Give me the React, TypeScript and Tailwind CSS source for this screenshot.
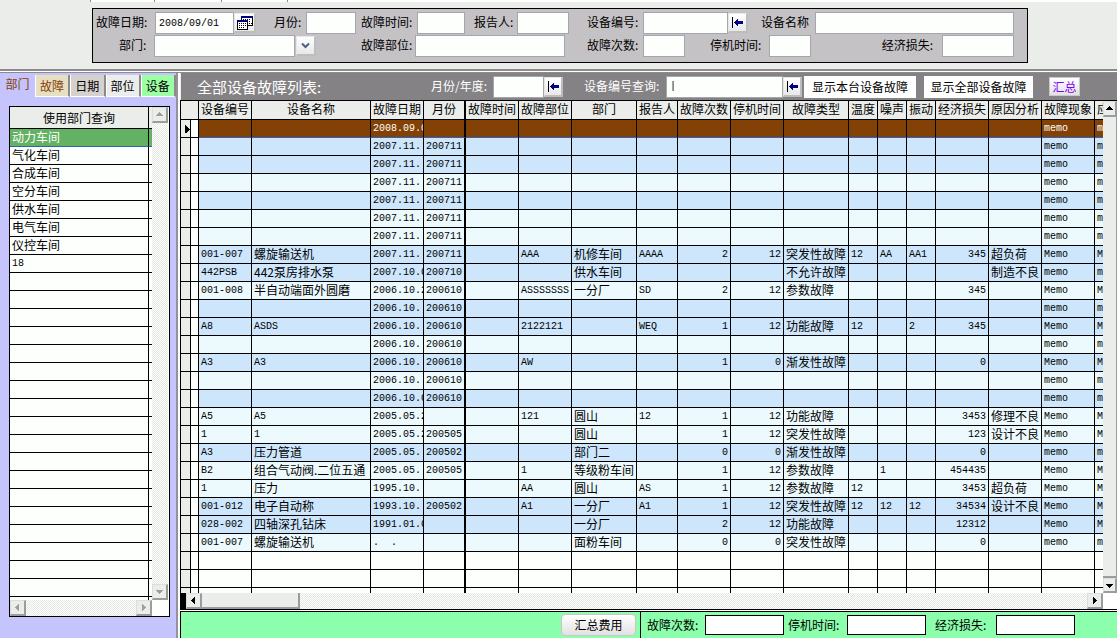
import { useState } from "react";
import clsx from "clsx";

type Tone = "selected" | "blue" | "light" | "blank";

interface Row {
  tone: Tone;
  cells: string[];
}

interface Column {
  label: string;
  width: string;
  right?: boolean;
  thick?: boolean;
}

const columns: Column[] = [
  { label: "设备编号", width: "w-[53px]" },
  { label: "设备名称", width: "w-[119px]" },
  { label: "故障日期", width: "w-[53px]" },
  { label: "月份", width: "w-[42px]", thick: true },
  { label: "故障时间", width: "w-[53px]" },
  { label: "故障部位", width: "w-[53px]" },
  { label: "部门", width: "w-[65px]" },
  { label: "报告人", width: "w-[41px]" },
  { label: "故障次数", width: "w-[53px]", right: true },
  { label: "停机时间", width: "w-[53px]", right: true },
  { label: "故障类型", width: "w-[65px]" },
  { label: "温度", width: "w-[29px]" },
  { label: "噪声", width: "w-[29px]" },
  { label: "振动", width: "w-[29px]" },
  { label: "经济损失", width: "w-[53px]", right: true },
  { label: "原因分析", width: "w-[53px]" },
  { label: "故障现象", width: "w-[53px]" },
  { label: "应急措施", width: "w-[53px]" },
];

const row = (tone: Tone, line: string): Row => ({
  tone,
  cells: line.split("|"),
});

// code|name|date|month|time|part|dept|reporter|count|stop|type|temp|noise|vibration|loss|cause|memo|memo
const rows: Row[] = [
  row("selected", "||2008.09.01||||||||||||||memo|memo"),
  row("blue", "||2007.11.|200711|||||||||||||memo|memo"),
  row("blue", "||2007.11.|200711|||||||||||||memo|memo"),
  row("light", "||2007.11.|200711|||||||||||||memo|memo"),
  row("blue", "||2007.11.|200711|||||||||||||memo|memo"),
  row("light", "||2007.11.|200711|||||||||||||memo|memo"),
  row("light", "||2007.11.|200711|||||||||||||memo|memo"),
  row("blue", "001-007|螺旋输送机|2007.11.|200711||AAA|机修车间|AAAA|2|12|突发性故障|12|AA|AA1|345|超负荷|Memo|Memo"),
  row("blue", "442PSB|442泵房排水泵|2007.10.0|200710|||供水车间||||不允许故障|||||制造不良|memo|memo"),
  row("light", "001-008|半自动端面外圆磨|2006.10.2|200610||ASSSSSSS|一分厂|SD|2|12|参数故障||||345||Memo|Memo"),
  row("blue", "||2006.10.|200610|||||||||||||memo|memo"),
  row("blue", "A8|ASDS|2006.10.|200610||2122121||WEQ|1|12|功能故障|12||2|345||Memo|Memo"),
  row("light", "||2006.10.|200610|||||||||||||memo|memo"),
  row("blue", "A3|A3|2006.10.|200610||AW|||1|0|渐发性故障||||0||Memo|Memo"),
  row("light", "||2006.10.|200610|||||||||||||memo|memo"),
  row("blue", "||2006.10.0|200610|||||||||||||memo|memo"),
  row("light", "A5|A5|2005.05.2|||121|圆山|12|1|12|功能故障||||3453|修理不良|Memo|Memo"),
  row("light", "1|1|2005.05.2|200505|||圆山||1|12|突发性故障||||123|设计不良|Memo|Memo"),
  row("blue", "A3|压力管道|2005.05.|200502|||部门二||0|0|渐发性故障||||0||memo|memo"),
  row("light", "B2|组合气动阀.二位五通|2005.05.|200505||1|等级粉车间||1|12|参数故障||1||454435||Memo|Memo"),
  row("light", "1|压力|1995.10.|||AA|圆山|AS|1|12|参数故障|12|||3453|超负荷|Memo|Memo"),
  row("blue", "001-012|电子自动称|1993.10.|200502||A1|一分厂|A1|1|12|突发性故障|12|12|12|34534|设计不良|Memo|Memo"),
  row("blue", "028-002|四轴深孔钻床|1991.01.0||||一分厂||2|12|功能故障||||12312||Memo|Memo"),
  row("light", "001-007|螺旋输送机|.  .||||面粉车间||0|0|突发性故障||||0||memo|memo"),
  row("blank", "|||||||||||||||||"),
  row("blank", "|||||||||||||||||"),
  row("blank", "|||||||||||||||||"),
];

const departments = [
  "动力车间",
  "气化车间",
  "合成车间",
  "空分车间",
  "供水车间",
  "电气车间",
  "仪控车间",
  "18",
  ...Array<string>(19).fill(""),
];

const toneClass: Record<Tone, string> = {
  selected: "bg-[#844105] text-white",
  blue: "bg-[#cde6fc]",
  light: "bg-[#edfafd]",
  blank: "bg-[#fdfffc]",
};

const isLatin = (text: string) => /^[\x20-\x7e]*$/.test(text);

const track =
  "bg-[repeating-conic-gradient(#ffffff_0%_25%,#e6e8e4_0%_50%)] bg-[length:2px_2px]";

const mono = "font-['Liberation_Mono',monospace] text-[10px]";

// Chinese glyphs sit lower in their line box than the mono ones
const cellText = (text: string) =>
  isLatin(text) ? `${mono} leading-[17px]` : "pb-[2px] leading-[15px]";

interface FieldProps {
  id: string;
  label: string;
  labelClass: string;
  inputClass: string;
  defaultValue?: string;
}

const Field: React.FC<FieldProps> = ({
  id,
  label,
  labelClass,
  inputClass,
  defaultValue,
}) => (
  <>
    <label
      htmlFor={id}
      className={clsx("shrink-0 pb-[2px] whitespace-nowrap", labelClass)}
    >
      {label}
    </label>
    <input
      id={id}
      defaultValue={defaultValue}
      className={clsx(
        "h-[22px] min-w-0 border border-[#a5a5ad] bg-[#fdfffc] px-[3px] outline-none",
        mono,
        inputClass
      )}
    />
  </>
);

const BackArrow = () => (
  <svg width="11" height="11" viewBox="0 0 11 11" shapeRendering="crispEdges">
    <path d="M0 0h1v11H0z" fill="#000" />
    <path
      d="M2 5h1V4h1V3h1V2h1v2h5v3H6v2H5V8H4V7H3V6H2z"
      fill="#000084"
    />
  </svg>
);

const CalendarIcon = () => (
  <svg width="16" height="14" viewBox="0 0 16 14" shapeRendering="crispEdges">
    <path d="M4.5.5h11v9h-11z" fill="#fff" stroke="#000" />
    <path d="M4 0h12v2H4z" fill="#000084" />
    <path d="M6 3.5h8M6 5.5h8M12 7.5h3" stroke="#000" strokeDasharray="1 1" />
    <path d="M.5 4.5h10v9H.5z" fill="#fff" stroke="#000" />
    <path d="M0 4h11v2H0z" fill="#000084" />
    <path d="M2 7.5h8M2 9.5h8M2 11.5h6" stroke="#000" strokeDasharray="1 1" />
  </svg>
);

const IconButton: React.FC<{
  label: string;
  className?: string;
  children: React.ReactNode;
}> = ({ label, className, children }) => (
  <button
    type="button"
    aria-label={label}
    className={clsx(
      "flex shrink-0 items-center justify-center border border-r-2 border-b-2 border-t-[#e6e6e6] border-r-[#bdbdbd] border-b-[#bdbdbd] border-l-[#e6e6e6] bg-linear-to-b from-white to-[#e8e8e8]",
      className
    )}
  >
    {children}
  </button>
);

const arrows = {
  up: "M4 2h1v1h1v1h1v1h1v1H1V5h1V4h1V3h1z",
  down: "M1 3h7v1H7v1H6v1H5v1H4V6H3V5H2V4H1z",
  left: "M6 1v7H5V7H4V6H3V5H2V4h1V3h1V2h1V1z",
  right: "M3 1v7h1V7h1V6h1V5h1V4H6V3H5V2H4V1z",
};

const ScrollButton: React.FC<{
  dir: keyof typeof arrows;
  dim?: boolean;
  className: string;
}> = ({ dir, dim, className }) => (
  <button
    type="button"
    aria-label={dir}
    className={clsx(
      "flex shrink-0 items-center justify-center border-t border-r-2 border-b-2 border-l border-t-[#dcdedb] border-r-[#9a9ca0] border-b-[#9a9ca0] border-l-[#dcdedb] bg-[#ebedea]",
      className
    )}
  >
    <svg width="9" height="9" viewBox="0 0 9 9" shapeRendering="crispEdges">
      <path d={arrows[dir]} fill={dim ? "#9c9ea0" : "#000"} />
    </svg>
  </button>
);

const FormPanel = () => (
  <div className="mt-[6px] mr-[89px] mb-[6px] ml-[92px] flex flex-col gap-px border border-black bg-[#c5c2c6] pt-[3px] pr-[13px] pb-[5px]">
    <div className="flex items-center">
      <Field id="date" label="故障日期:" labelClass="w-[62px] pl-[3px]" inputClass="w-[79px]" defaultValue="2008/09/01" />
      <IconButton label="选择日期" className="h-5 w-[22px]">
        <CalendarIcon />
      </IconButton>
      <Field id="month" label="月份:" labelClass="w-[50px] pl-[18px]" inputClass="w-[50px]" />
      <Field id="time" label="故障时间:" labelClass="w-[61px] pl-[5px]" inputClass="w-[48px]" />
      <Field id="reporter" label="报告人:" labelClass="w-[52px] pl-[9px]" inputClass="w-[52px]" />
      <Field id="code" label="设备编号:" labelClass="w-[74px] pl-[18px]" inputClass="w-[85px]" />
      <IconButton label="取设备编号" className="h-5 w-5">
        <BackArrow />
      </IconButton>
      <Field id="name" label="设备名称" labelClass="w-[67px] pl-[13px]" inputClass="flex-1" />
    </div>
    <div className="flex items-center">
      <Field id="dept" label="部门:" labelClass="w-[61px] pl-[26px]" inputClass="w-[141px]" />
      <IconButton label="选择部门" className="ml-px h-5 w-5">
        <svg width="9" height="7" viewBox="0 0 9 7" fill="none">
          <path d="M1 1.5l3.5 3.5L8 1.5" stroke="#4a6184" strokeWidth="2" />
        </svg>
      </IconButton>
      <Field id="part" label="故障部位:" labelClass="w-[99px] pl-[45px]" inputClass="w-[150px]" />
      <Field id="count" label="故障次数:" labelClass="w-[78px] pl-[22px]" inputClass="w-[42px]" />
      <Field id="stop" label="停机时间:" labelClass="w-[84px] pl-[25px]" inputClass="w-[42px]" />
      <Field id="loss" label="经济损失:" labelClass="flex-1 pr-[9px] text-right" inputClass="w-[72px]" />
    </div>
  </div>
);

const tabs = [
  { label: "部门", style: "w-[35px] h-[22px] text-[#844105]" },
  { label: "故障", style: "flex-1 bg-[#e6dfc2] text-[#844105]" },
  { label: "日期", style: "flex-1 bg-[#d5d2cd]" },
  { label: "部位", style: "flex-1 bg-[#ebedea]" },
  { label: "设备", style: "flex-1 bg-[#9cffa4]" },
];

const Sidebar = () => {
  const [selected, setSelected] = useState(0);

  return (
    <aside className="flex w-[176px] shrink-0 flex-col bg-[#c5c4fc]">
      <div className="flex">
        {tabs.map((tab, index) => (
          <button
            key={tab.label}
            type="button"
            className={clsx(
              "leading-4",
              index > 0 &&
                "mt-[2px] h-[22px] border-r-2 border-b border-l border-r-[#8c8a8c] border-b-white border-l-white",
              tab.style
            )}
          >
            {tab.label}
          </button>
        ))}
      </div>
      <div className="mt-[9px] mr-[6px] mb-[21px] ml-[9px] flex min-h-0 flex-1 flex-col border border-black bg-[#fdfffc]">
        <div className="flex min-h-0 flex-1">
          <div className="min-w-0 flex-1 overflow-hidden">
            <table className="w-full table-fixed border-separate border-spacing-0">
              <thead>
                <tr>
                  <th className="h-[22px] border-r border-b border-black bg-[#ebedea] p-0 font-normal">
                    使用部门查询
                  </th>
                  <th className="w-[3px] border-b border-black bg-[#ebedea] p-0" />
                </tr>
              </thead>
              <tbody>
                {departments.map((name, index) => (
                  <tr
                    key={index}
                    onClick={() => setSelected(index)}
                    className={clsx(index === selected && "bg-[#63b163] text-white")}
                  >
                    <td
                      className={clsx(
                        "h-[18px] border-r border-b border-r-black p-0 pl-[2px]",
                        index === selected ? "border-b-[#3163b5]" : "border-b-black",
                        cellText(name)
                      )}
                    >
                      {name}
                    </td>
                    <td
                      className={clsx(
                        "border-b p-0",
                        index === selected ? "border-b-[#3163b5]" : "border-b-black"
                      )}
                    />
                  </tr>
                ))}
              </tbody>
            </table>
          </div>
          <div className={clsx("mr-px flex w-4 flex-col justify-between", track)}>
            <ScrollButton dir="up" dim className="h-4 w-4" />
            <ScrollButton dir="down" dim className="h-4 w-4" />
          </div>
        </div>
        <div className={clsx("mr-[17px] flex h-4 justify-between", track)}>
          <ScrollButton dir="left" dim className="h-4 w-4" />
          <ScrollButton dir="right" dim className="h-4 w-4" />
        </div>
      </div>
    </aside>
  );
};

const Toolbar = () => (
  <div className="flex h-[27px] items-center bg-[#848284] text-white">
    <h1 className="w-[250px] shrink-0 pl-4 text-[15px]">全部设备故障列表:</h1>
    <Field id="period" label="月份/年度:" labelClass="w-[62px]" inputClass="w-[51px] text-black" />
    <IconButton label="按月份查询" className="h-5 w-[19px]">
      <BackArrow />
    </IconButton>
    <Field
      id="lookup"
      label="设备编号查询:"
      labelClass="w-[103px] pl-[21px]"
      inputClass="w-[117px] text-black"
      defaultValue="|"
    />
    <IconButton label="按设备编号查询" className="h-5 w-[19px]">
      <BackArrow />
    </IconButton>
    <button type="button" className="ml-[2px] h-[22px] w-28 shrink-0 bg-white text-black">
      显示本台设备故障
    </button>
    <button type="button" className="ml-2 h-[22px] w-[109px] shrink-0 bg-white text-black">
      显示全部设备故障
    </button>
    <button
      type="button"
      className="ml-4 h-[19px] w-[31px] shrink-0 border border-[#c8c8c8] bg-linear-to-b from-white to-[#e2e2e2] leading-4 text-[#8000ff]"
    >
      汇总
    </button>
  </div>
);

const FaultTable = () => (
  <table className="w-[967px] table-fixed border-separate border-spacing-0">
    <colgroup>
      <col className="w-[10px]" />
      <col className="w-2" />
      {columns.map((col) => (
        <col key={col.label} className={col.width} />
      ))}
    </colgroup>
    <thead>
      <tr className="bg-[#ebedea]">
        <th colSpan={2} className="h-[19px] border-r border-b border-black p-0" />
        {columns.map((col) => (
          <th
            key={col.label}
            className={clsx(
              "overflow-hidden border-b border-black p-0 pb-[3px] leading-[15px] font-normal whitespace-nowrap",
              col.thick ? "border-r-2" : "border-r"
            )}
          >
            {col.label}
          </th>
        ))}
      </tr>
    </thead>
    <tbody>
      {rows.map((item, index) => (
        <tr key={index} className={toneClass[item.tone]}>
          <td className="h-[18px] border-r border-b border-black bg-[#ebedea] p-0">
            {item.tone === "selected" && (
              <svg width="9" height="8" viewBox="0 0 9 8" shapeRendering="crispEdges">
                <path d="M4 0h1v1h1v1h1v1h1v1h1v1H8v1H7v1H6v1H4z" fill="#000" />
              </svg>
            )}
          </td>
          <td className="border-r border-b border-black bg-[#fdfffc] p-0" />
          {columns.map((col, i) => (
            <td
              key={col.label}
              className={clsx(
                "overflow-hidden border-b border-r-black p-0 px-[2px] whitespace-pre",
                col.thick ? "border-r-2" : "border-r",
                item.tone === "selected" ? "border-b-[#3163b5]" : "border-b-black",
                col.right && "text-right",
                cellText(item.cells[i])
              )}
            >
              {item.cells[i]}
            </td>
          ))}
        </tr>
      ))}
    </tbody>
  </table>
);

interface TotalProps {
  id: string;
  label: string;
  labelClass: string;
}

const Total: React.FC<TotalProps> = ({ id, label, labelClass }) => (
  <>
    <label htmlFor={id} className={clsx("shrink-0 whitespace-nowrap", labelClass)}>
      {label}
    </label>
    <input id={id} className={clsx("h-5 w-[79px] border border-black bg-white px-1", mono)} />
  </>
);

const App = () => {
  return (
    <div className="flex h-screen flex-col overflow-hidden bg-[#ebedea] font-['Noto_Sans_CJK_SC',sans-serif] text-xs text-black">
      <div className="flex h-[2px] shrink-0 bg-white">
        <div className="w-[91px] border-r border-[#8c8a8c] bg-[#ebedea]" />
        <div className="w-16 border-r border-[#8c8a8c]" />
        <div className="w-[67px] border-r border-[#8c8a8c]" />
        <div className="w-[66px] border-r border-[#8c8a8c]" />
      </div>
      <FormPanel />
      <div className="h-1 shrink-0 border-t-2 border-b border-[#8c8a8c] bg-white" />
      <div className="flex min-h-0 flex-1">
        <Sidebar />
        <div className="w-1 shrink-0 border-r-2 border-l-2 border-r-white border-l-[#94929a]" />
        <main className="flex min-w-0 flex-1 flex-col">
          <div className="ml-px">
            <Toolbar />
          </div>
          <div className="flex min-h-0 flex-1 border-t border-l border-black bg-[#fdfffc]">
            <div className="min-w-0 flex-1 overflow-hidden">
              <FaultTable />
            </div>
            <div className="flex w-[14px] shrink-0 flex-col bg-[#ebedea]">
              <ScrollButton dir="up" className="h-4 w-full" />
              <div className="flex-1 border-r border-b-2 border-[#9a9ca0]" />
              <ScrollButton dir="down" className="h-[15px] w-full" />
            </div>
          </div>
          <div className="flex h-4 shrink-0 bg-white">
            <div className="w-[6px] bg-black" />
            <div className={clsx("flex flex-1", track)}>
              <ScrollButton dir="left" className="h-4 w-4" />
              <div className="mr-auto w-[98px] border-r-2 border-b-2 border-[#9a9ca0] bg-[#ebedea]" />
              <ScrollButton dir="right" className="h-4 w-4" />
            </div>
            <div className="w-[14px]" />
          </div>
          <div className="h-[3px] shrink-0 border-t border-b border-black bg-white" />
          <footer className="flex h-[26px] shrink-0 items-stretch border-l border-black bg-[#8cffac]">
            <div className="flex w-[460px] items-center justify-end border-r border-black pr-1">
              <button
                type="button"
                className="h-[22px] w-[75px] rounded-sm border border-[#c6c8c6] bg-linear-to-b from-white to-[#e2e2e2]"
              >
                汇总费用
              </button>
            </div>
            <div className="flex items-center">
              <Total id="total-count" label="故障次数:" labelClass="w-16 pl-[6px]" />
              <Total id="total-stop" label="停机时间:" labelClass="w-[63px] pl-1" />
              <Total id="total-loss" label="经济损失:" labelClass="w-[70px] pl-[9px]" />
            </div>
          </footer>
        </main>
      </div>
    </div>
  );
};

export default App;
